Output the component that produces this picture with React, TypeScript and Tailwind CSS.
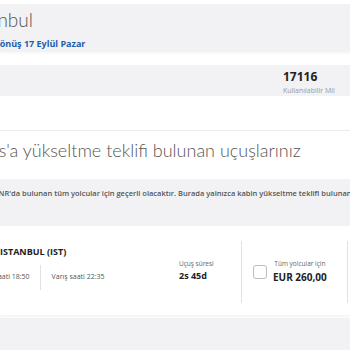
export default function App() {
  return (
    <div className="w-[350px] h-[350px] overflow-hidden bg-white font-['Open_Sans',sans-serif] text-[#333]">
      {/* trip summary */}
      <div className="pt-[4px]">
        <div className="h-[48px] bg-[#f2f2f4] shadow-[0_2px_2px_rgba(0,0,0,0.03)] pt-[5px] whitespace-nowrap">
          <div className="-ml-[31px] text-[19px] leading-[22px] font-light font-['Lato',sans-serif] text-[#555]">
            İstanbul
          </div>
          <div className="-ml-[7px] mt-[7px] text-[9px] leading-[12px] font-bold text-[#1d5fae]">
            Dönüş 17 Eylül Pazar
          </div>
        </div>
      </div>

      {/* miles */}
      <div className="mt-[13px] h-[31px] bg-[#f2f2f4] flex justify-end pr-[8px]">
        <div className="w-[59px] pt-[5px]">
          <div className="text-[12px] leading-[14px] font-bold text-[#222]">17116</div>
          <div className="mt-[2px] text-[7px] leading-[9px] text-[#999] whitespace-nowrap">Kullanılabilir Mil</div>
        </div>
      </div>

      {/* offers */}
      <div className="mt-[34px] border-t border-[#ececee] pt-[7px]">
        <h1 className="-ml-[9px] text-[18px] leading-[24px] font-light font-['Lato',sans-serif] text-[#555] whitespace-nowrap">
          ss'a yükseltme teklifi bulunan uçuşlarınız
        </h1>
      </div>

      <div className="mt-[17px] h-[47px] bg-[#f2f2f4] pt-[9px] -ml-[6px] whitespace-nowrap text-[7.5px] leading-[10px] font-semibold text-[#555]">
        PNR'da bulunan tüm yolcular için geçerli olacaktır. Burada yalnızca kabin yükseltme teklifi bulunan uçuşlarınız listelenmektedir.
      </div>

      {/* flight card */}
      <div className="h-[89px] bg-white shadow-[0_2px_3px_rgba(0,0,0,0.05)] flex">
        <div className="flex-1 pt-[20px] whitespace-nowrap">
          <div className="text-[9px] leading-[12px] font-bold text-[#222]">ISTANBUL (IST)</div>
          <div className="mt-[7px] flex items-center -ml-[26px] text-[7px] text-[#555]">
            <span className="pr-[10px]">Kalkış saati 18:50</span>
            <span className="h-[25px] border-l border-[#e2e2e2]" />
            <span className="pl-[11px]">Varış saati 22:35</span>
          </div>
        </div>
        <div className="w-[62px] pt-[34px]">
          <div className="text-[6.5px] leading-[8px] text-[#666]">Uçuş süresi</div>
          <div className="mt-[2px] text-[9px] leading-[12px] font-bold text-[#222]">2s 45d</div>
        </div>
        <div className="mt-[15px] h-[62px] w-[107px] border-x border-[#e2e2e2] flex items-center pl-[11px] gap-[6px]">
          <span className="w-[14px] h-[14px] rounded-[3px] border border-[#bdbdbd] bg-white" />
          <div className="text-center -mt-[2px]">
            <div className="text-[6.5px] leading-[8px] text-[#666]">Tüm yolcular için</div>
            <div className="mt-[3px] text-[10px] leading-[12px] font-bold text-[#222]">EUR 260,00</div>
          </div>
        </div>
        <div className="w-[2px]" />
      </div>

      <div className="mt-[3px] h-[40px] bg-[#f2f2f4]" />
    </div>
  );
}
